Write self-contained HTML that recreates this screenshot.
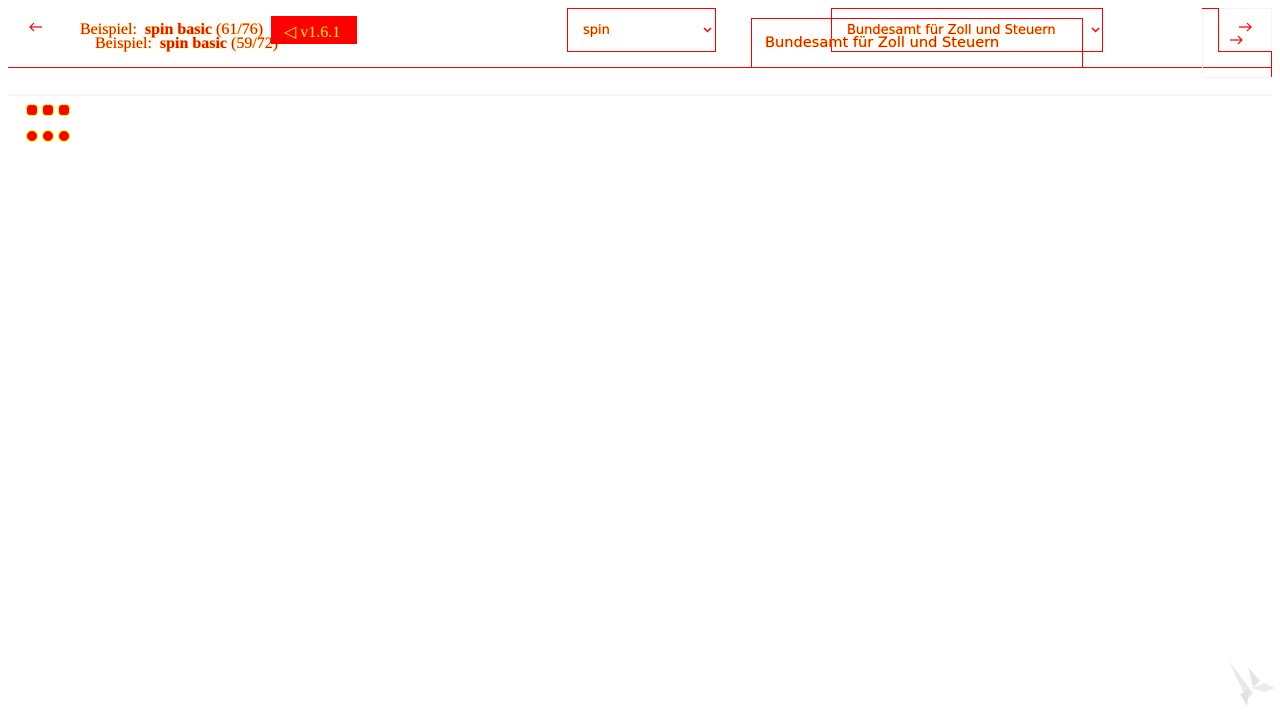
<!DOCTYPE html>
<html><head><meta charset="utf-8"><style>
html,body{margin:0;padding:0;width:1280px;height:720px;background:#fff;overflow:hidden;position:relative}
.a{position:absolute}
.t{color:#f00;text-shadow:0 0 1px #ff0,0 0 1px #ff0;white-space:nowrap;line-height:1}
.sans{font-family:"DejaVu Sans","Liberation Sans",sans-serif}
.serif{font-family:"Liberation Serif",serif}
.box{position:absolute;border:1px solid #f00;box-sizing:border-box}
.hl{position:absolute;height:1px;background:#f00}
.vl{position:absolute;width:1px;background:#f00}
.d{position:absolute;width:10px;height:10px;border-radius:50%;background:#f00;box-shadow:0 0 0 1px #ff0}
</style></head><body>
<svg class="a" style="left:28px;top:21px" width="16" height="12" viewBox="0 0 16 12"><path d="M14 6H2M6 2L2 6L6 10" stroke="#f00" stroke-width="1.2" fill="none"/></svg>
<div class="a t serif" style="left:80px;top:22px;font-size:16px">Beispiel:&nbsp; <b>spin basic</b> (61/76)</div>
<div class="a t serif" style="left:95px;top:36px;font-size:16px">Beispiel:&nbsp; <b>spin basic</b> (59/72)</div>
<div class="a" style="left:271px;top:16px;width:86px;height:28px;background:#f00"></div>
<div class="a serif" style="left:284px;top:22px;font-size:16px;color:#ff0;white-space:nowrap">◁ v1.6.1</div>

<div class="box" style="left:567px;top:8px;width:149px;height:44px"></div>
<div class="a t sans" style="left:583px;top:24px;font-size:13px">spin</div>
<svg class="a" style="left:703px;top:27px" width="9" height="6" viewBox="0 0 9 6"><path d="M1 1L4.5 4.5L8 1" stroke="#f00" stroke-width="1.5" fill="none"/></svg>

<div class="box" style="left:831px;top:8px;width:272px;height:44px"></div>
<div class="a t sans" style="left:847px;top:24px;font-size:13px">Bundesamt für Zoll und Steuern</div>
<svg class="a" style="left:1091px;top:27px" width="9" height="6" viewBox="0 0 9 6"><path d="M1 1L4.5 4.5L8 1" stroke="#f00" stroke-width="1.5" fill="none"/></svg>
<div class="box" style="left:751px;top:18px;width:332px;height:50px"></div>
<div class="a t sans" style="left:765px;top:36px;font-size:14.6px">Bundesamt für Zoll und Steuern</div>

<div class="hl" style="left:8px;top:67px;width:1264px"></div>
<div class="a" style="left:1202px;top:8px;width:70px;height:70px;border:1px solid #f4f4f4;box-sizing:border-box"></div>
<div class="hl" style="left:1202px;top:8px;width:16px"></div>
<div class="vl" style="left:1218px;top:8px;height:44px"></div>
<div class="hl" style="left:1218px;top:51px;width:54px"></div>
<div class="vl" style="left:1271px;top:51px;height:26px"></div>
<svg class="a" style="left:1239px;top:21px" width="14" height="12" viewBox="0 0 14 12"><path d="M0 6H12M8 2L12 6L8 10" stroke="#f00" stroke-width="1.2" fill="none"/></svg>
<svg class="a" style="left:1230px;top:34px" width="14" height="12" viewBox="0 0 14 12"><path d="M0 6H12M8 2L12 6L8 10" stroke="#f00" stroke-width="1.2" fill="none"/></svg>

<div class="a" style="left:8px;top:94px;width:1264px;height:2px;background:#f6f6f6"></div>
<div class="d" style="left:27px;top:105px;border-radius:3px"></div>
<div class="d" style="left:43px;top:105px;border-radius:3px"></div>
<div class="d" style="left:59px;top:105px;border-radius:3px"></div>
<div class="d" style="left:27px;top:131px"></div>
<div class="d" style="left:43px;top:131px"></div>
<div class="d" style="left:59px;top:131px"></div>

<svg class="a" style="left:1220px;top:655px" width="60" height="55" viewBox="0 0 60 55">
<polygon points="9,6 33,38 27,45" fill="#e8e8e8"/>
<polygon points="28,12 33,32 40,26" fill="#e4e4e4"/>
<polygon points="31,33 45,28 55,33 44,37" fill="#ececec"/>
<polygon points="20,39 29,36 27,51" fill="#e2e2e2"/>
</svg>
</body></html>
